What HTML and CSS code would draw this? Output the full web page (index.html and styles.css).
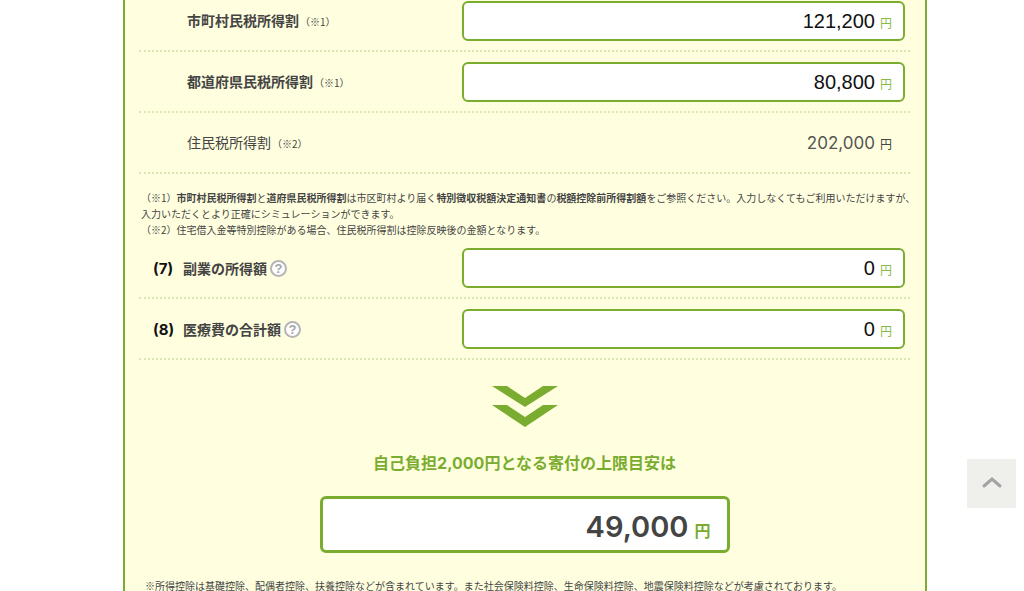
FILE: index.html
```html
<!doctype html>
<html lang="ja">
	<head>
		<meta charset="utf-8">
		<title>控除上限額シミュレーション</title>
		<link rel="stylesheet" href="styles.css">
	</head>
	<body>
		<form class="simulator">
			<div class="row sub">
				<label class="name" for="city">市町村民税所得割<small>（※1）</small></label>
				<div class="field"><input type="text" id="city" value="121,200"><span class="yen">円</span></div>
			</div>
			<div class="row sub">
				<label class="name" for="pref">都道府県民税所得割<small>（※1）</small></label>
				<div class="field"><input type="text" id="pref" value="80,800"><span class="yen">円</span></div>
			</div>
			<div class="row sub total">
				<div class="name">住民税所得割<small>（※2）</small></div>
				<div class="field"><span class="num">202,000</span><span class="yen">円</span></div>
			</div>
			<div class="notes">
				<p>（※1）<b>市町村民税所得割</b>と<b>道府県民税所得割</b>は市区町村より届く<b>特別徴収税額決定通知書</b>の<b>税額控除前所得割額</b>をご参照ください。入力しなくてもご利用いただけますが、<br>入力いただくとより正確にシミュレーションができます。</p>
				<p>（※2）住宅借入金等特別控除がある場合、住民税所得割は控除反映後の金額となります。</p>
			</div>
			<div class="row">
				<div class="name">
					<label for="side"><span class="no">(7)</span>副業の所得額</label>
					<button type="button" class="help" aria-label="副業の所得額の説明">?</button>
				</div>
				<div class="field"><input type="text" id="side" value="0"><span class="yen">円</span></div>
			</div>
			<div class="row">
				<div class="name">
					<label for="medical"><span class="no">(8)</span>医療費の合計額</label>
					<button type="button" class="help" aria-label="医療費の合計額の説明">?</button>
				</div>
				<div class="field"><input type="text" id="medical" value="0"><span class="yen">円</span></div>
			</div>
			<div class="result">
				<svg class="arrow" width="66" height="42" viewBox="0 0 66 42" aria-hidden="true">
					<path d="M0 1H15L33 13L51 1H66L33 22Z M0 20H15L33 32L51 20H66L33 42Z"/>
				</svg>
				<h2>自己負担2,000円となる寄付の上限目安は</h2>
				<div class="amount"><output>49,000</output><span>円</span></div>
			</div>
			<p class="foot">※所得控除は基礎控除、配偶者控除、扶養控除などが含まれています。また社会保険料控除、生命保険料控除、地震保険料控除などが考慮されております。</p>
		</form>
		<a class="pagetop" href="#" aria-label="ページの先頭へ">
			<svg width="22" height="18" viewBox="0 0 22 18" aria-hidden="true">
				<path d="M3 11L11 4L19 11"/>
			</svg>
		</a>
	</body>
</html>
```
FILE: styles.css
```css
* {
	box-sizing: border-box;
	margin: 0;
	padding: 0;
}
body {
	padding: 0 97px 0 123px;
	background: #fff;
	color: #444;
	font-family: "Noto Sans CJK JP", sans-serif;
	font-size: 14px;
}
.simulator {
	padding: 0 15px 0 14px;
	border: solid #7aad2f;
	border-width: 0 2px;
	background: #ffffdf;
}
.row {
	display: grid;
	grid-template-columns: 8fr 11fr;
	align-items: center;
	padding: 10px 5px 9px 0;
	border-bottom: 2px dotted #dbe8b4;
}
.row:first-child {
	padding-top: 1px;
}
.name {
	display: flex;
	align-items: center;
	padding-left: 14px;
	font-weight: bold;
	line-height: 20px;
}
.sub .name {
	align-items: baseline;
	gap: 1px;
	padding-left: 48px;
}
.total .name {
	font-weight: normal;
}
.name small {
	font-size: 10px;
	font-weight: normal;
}
.no {
	display: inline-block;
	width: 30px;
	color: #111;
	font-family: Inter, "Noto Sans CJK JP", sans-serif;
	font-size: 15px;
}
.help {
	width: 17px;
	height: 17px;
	margin-left: 3px;
	border: 2px solid #b5b5b8;
	border-radius: 50%;
	background: #fff;
	color: #a5a5a8;
	font: bold 13px/13px "Liberation Sans", sans-serif;
}
.field {
	display: flex;
	align-items: baseline;
	gap: 5px;
	height: 40px;
	padding: 0 11px;
	border: 2px solid #7aad2f;
	border-radius: 6px;
	background: #fff;
	line-height: 36px;
}
.field input {
	flex: 1;
	min-width: 0;
	height: 36px;
	border: 0;
	outline: 0;
	background: none;
	color: #111;
	font-family: "Liberation Sans", sans-serif;
	font-size: 20px;
	text-align: right;
}
.yen {
	color: #8aba45;
	font-size: 12px;
}
.total .field {
	justify-content: flex-end;
	border-color: transparent;
	background: none;
}
.total .num {
	color: #555;
	font-family: Inter, sans-serif;
	font-size: 17px;
}
.total .yen {
	color: #444;
}
.notes {
	margin-right: -14px;
	padding: 16px 0 0 2px;
	font-size: 10px;
	line-height: 16px;
}
.result {
	display: flex;
	flex-direction: column;
	align-items: center;
	padding-top: 25px;
}
.arrow {
	fill: #7aad2f;
}
.result h2 {
	margin: 24px 0 21px;
	color: #7aad2f;
	font-family: Inter, "Noto Sans CJK JP", sans-serif;
	font-size: 16px;
	font-weight: bold;
	line-height: 24px;
}
.amount {
	display: flex;
	align-items: baseline;
	justify-content: flex-end;
	gap: 6px;
	width: 100%;
	max-width: 410px;
	height: 57px;
	padding: 0 16px;
	border: 3px solid #7aad2f;
	border-radius: 6px;
	background: #fff;
	line-height: 55px;
}
.amount output {
	font-family: Inter, sans-serif;
	font-size: 29px;
	font-weight: 600;
}
.amount span {
	color: #7aad2f;
	font-size: 16px;
	font-weight: bold;
}
.foot {
	padding: 25px 0 16px 6px;
	font-size: 10px;
	line-height: 16px;
}
.pagetop {
	display: flex;
	align-items: center;
	justify-content: center;
	position: fixed;
	right: 8px;
	bottom: 83px;
	width: 49px;
	height: 49px;
	background: #efefeb;
}
.pagetop path {
	fill: none;
	stroke: #a3a3a3;
	stroke-width: 3;
	stroke-linecap: round;
}
```
